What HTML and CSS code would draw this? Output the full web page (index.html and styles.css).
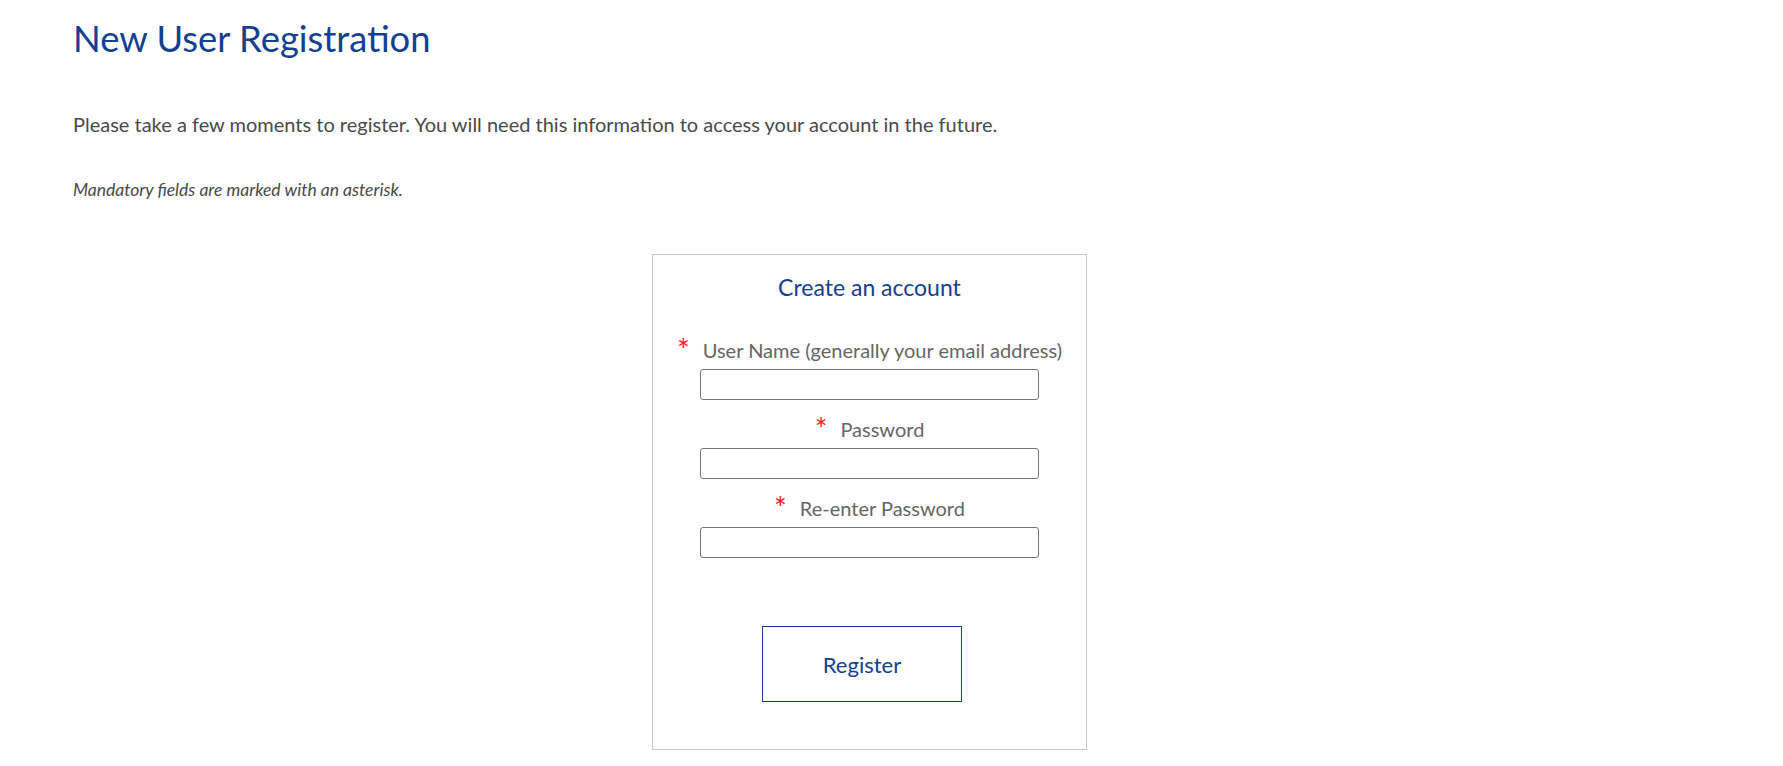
FILE: index.html
```html
<!DOCTYPE html>
<html lang="en">
<head>
<meta charset="utf-8">
<title>New User Registration</title>
<link rel="stylesheet" href="styles.css">
</head>
<body>
<div class="page">
  <h1 class="title">New User Registration</h1>
  <p class="intro">Please take a few moments to register. You will need this information to access your account in the future.</p>
  <p class="note">Mandatory fields are marked with an asterisk.</p>
  <div class="form-area">
    <form class="card">
      <h2 class="card-title">Create an account</h2>
      <div class="field">
        <label class="label"><span class="req">*</span><span class="label-text">User Name (generally your email address)</span></label>
        <input class="input" type="text">
      </div>
      <div class="field">
        <label class="label"><span class="req">*</span><span class="label-text">Password</span></label>
        <input class="input" type="password">
      </div>
      <div class="field">
        <label class="label"><span class="req">*</span><span class="label-text">Re-enter Password</span></label>
        <input class="input" type="password">
      </div>
      <div class="actions">
        <button class="btn" type="button">Register</button>
      </div>
    </form>
  </div>
</div>
</body>
</html>
```

FILE: styles.css
```css
* { box-sizing: border-box; }
html, body { margin: 0; padding: 0; background: #fff; }
body { font-family: "Lato", "Liberation Sans", sans-serif; color: #4a4a4a; }

.page { padding: 16px 117px 0 73px; }

.title {
  margin: 0;
  font-size: 36.4px;
  line-height: 44px;
  font-weight: 400;
  color: #124191;
}

.intro {
  margin: 52px 0 0;
  font-size: 20px;
  line-height: 24px;
  color: #4a4a4a;
}

.note {
  margin: 44px 0 0;
  font-size: 17.5px;
  line-height: 20px;
  font-style: italic;
  color: #4a4a4a;
}

.form-area { display: flex; justify-content: center; margin-top: 54px; }

.card {
  width: 435px;
  height: 496px;
  border: 1px solid #bfc9d6;
  display: flex;
  flex-direction: column;
  align-items: center;
  padding-top: 18px;
}

.card-title {
  margin: 0;
  font-size: 23px;
  line-height: 28px;
  font-weight: 400;
  color: #124191;
}

.field { display: flex; flex-direction: column; align-items: center; margin-top: 36px; }
.field + .field { margin-top: 16px; }

.label { display: flex; align-items: flex-start; font-size: 20px; line-height: 26px; color: #666; }
.req { color: #ff1a1a; font-size: 30px; line-height: 20px; height: 20px; margin-right: 13px; margin-top: 2px; }

.input {
  margin-top: 6px;
  width: 339px;
  height: 31px;
  border: 1px solid #767676;
  border-radius: 3px;
  background: #fff;
}

.actions { margin-top: 68px; padding-right: 15px; display: flex; justify-content: center; }

.btn {
  width: 200px;
  height: 76px;
  border: 1px solid #124191;
  background: #fff;
  color: #124191;
  font-family: "Lato", "Liberation Sans", sans-serif;
  font-size: 22px;
  padding: 0;
}
```
